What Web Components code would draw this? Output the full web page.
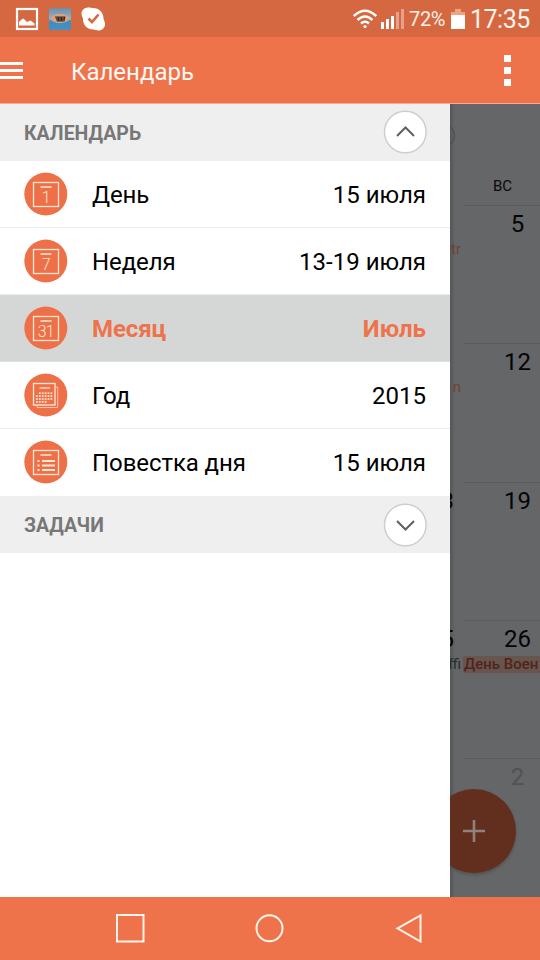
<!DOCTYPE html>
<html lang="ru">
<head>
<meta charset="utf-8">
<title>Календарь</title>
<style>
html,body{margin:0;padding:0}
body{width:540px;height:960px;overflow:hidden;font-family:Roboto,"Noto Sans",sans-serif;background:#fff}
</style>
</head>
<body>
<calendar-app></calendar-app>
<script>
const define = (name, html, setup) => customElements.define(name, class extends HTMLElement {
  constructor() {
    super();
    const t = document.createElement('template');
    t.innerHTML = html;
    this.attachShadow({mode: 'open'}).appendChild(t.content.cloneNode(true));
  }
  connectedCallback() { if (setup) setup(this, this.shadowRoot); }
});

define('status-bar', `<style>
:host{display:flex;height:37px;background:#d56841;color:#fff;align-items:center;box-sizing:border-box;padding:0 10px 0 15px}
svg{display:block;flex:none}
.apps{display:flex;gap:10px;align-items:center;flex:1}
.pct{font-size:20px;line-height:37px;margin:2px 6px 0 4px;color:#fff0e8;width:36px;white-space:nowrap;letter-spacing:-.35px}
.time{font-size:25px;line-height:37px;margin:2px 0 0 5px;width:60px;white-space:nowrap;letter-spacing:-.5px;color:#fff4ee}
</style>
<div class="apps">
<svg width="24" height="24"><rect x="2" y="2" width="20" height="20" fill="none" stroke="#fff" stroke-width="2.2"/><path d="M4 18.500V15l2.500-2.500 2-1 3.500 3.500 3.500-1.500 4 3v2z" fill="#fff"/></svg>
<svg width="22" height="22"><defs><linearGradient id="g" x2="0" y2="1"><stop offset="0" stop-color="#6f8ea5"/><stop offset=".5" stop-color="#8fb5c7"/><stop offset=".6" stop-color="#368fc6"/><stop offset="1" stop-color="#4a8fc0"/></linearGradient></defs><rect width="22" height="22" rx="1" fill="url(#g)"/><ellipse cx="11" cy="10.500" rx="9" ry="4.500" fill="#e39f7c"/><path d="M6 8.500h10.500l-1 5H8z" fill="#3c2a25"/><path d="M8 9v4M11 9v4M14 9v4" stroke="#86663e"/></svg>
<svg width="25" height="24"><path d="M7 .5C9 .2 10.500 1 12 1c6 0 10.500 4.500 10.500 10.500 0 1 1.500 3 1.500 5.500 0 4-3 6.500-6.500 6.500-2 0-3.500-1-5-1C6 22.500 2 18 2 12 2 10.500.5 9 .5 7 .5 3 3.500.7 7 .5z" fill="#fff"/><path d="M7.500 11.500l3.500 3.500 6.500-7.500" fill="none" stroke="#d56841" stroke-width="2.600"/></svg>
</div>
<svg width="24" height="20" fill="none" stroke="#fff" stroke-width="2.500"><path d="M.8 7Q12-3.500 23.200 7M4.500 11Q12 4 19.500 11M8 14.500Q12 11 16 14.500"/><circle cx="12" cy="17.500" r="1.600" fill="#fff" stroke="none"/></svg>
<svg width="24" height="22" style="margin-left:4px" fill="#fff"><path d="M0 14h3v7H0zM5 11h3v10H5zM10 8h3v13h-3z"/><path d="M15 4h3v17h-3zM20 1h3v20h-3z" opacity=".38"/></svg>
<span class="pct">72%</span>
<svg width="14" height="22"><path d="M4 1h6v3h4v4H0V4h4z" fill="#efa385"/><path d="M0 7h14v14H0z" fill="#fff"/></svg>
<span class="time">17:35</span>`);

define('app-bar', `<style>
:host{display:flex;height:67px;box-sizing:border-box;background:#ee734b;border-bottom:1px solid #f9a791;color:#fff;align-items:center;padding-right:29px}
.burger{display:grid;gap:4px;width:23px;margin-top:1px}
.burger i{height:3px;background:#fff}
h1{margin:3px 0 0 48px;font-weight:400;font-size:24px;line-height:36px;flex:1;color:#fff8f3}
.dots{display:grid;gap:5px;margin-top:1px}
.dots i{width:7px;height:7px;background:#fff}
</style><div class="burger"><i></i><i></i><i></i></div><h1><slot></slot></h1><div class="dots"><i></i><i></i><i></i></div>`);

define('section-header', `<style>
:host{display:flex;height:57px;box-sizing:border-box;background:#efefef;align-items:center;justify-content:space-between;padding:0 23px 0 24px;color:#777;font-size:19.500px;font-weight:700}
span{line-height:30px;margin-top:3px}
svg{display:block}
:host([open]) svg{margin-top:-1px}
:host([open]) path{transform:scaleY(-1);transform-origin:22px 22px}
</style><span><slot></slot></span><svg width="44" height="44"><circle cx="22.300" cy="22" r="20.800" fill="#fff" stroke="#cdcdcd" stroke-width="1.400"/><path d="M14 18l8.500 8.500 8.500-8.500" fill="none" stroke="#606060" stroke-width="2"/></svg>`);

const dots = (() => {
  let s = '';
  for (let r = 0; r < 4; r++) for (let c = 0; c < 6; c++)
    if (!(r === 0 && c < 1) && !(r === 3 && c > 3)) s += `<rect x="${12 + c * 2.9}" y="${19.300 + r * 2.900}" width="1.800" height="1.800" fill="#ffe2ce" stroke="none"/>`;
  return s;
})();
const numeral = n => `<text x="21.800" y="30.700" text-anchor="middle" font-family="Roboto" font-weight="300" font-size="16" letter-spacing="-.8" fill="#ffe8d4" stroke="none">${n}</text>`;
const frame = '<rect x="9.500" y="10.500" width="25" height="24"/><path d="M16.500 15h11" stroke-width="1.500"/>';
const glyphs = {
  day: frame + numeral(1),
  week: frame + numeral(7),
  month: frame + numeral(31),
  year: '<rect x="9.500" y="10.500" width="21.500" height="21.500"/><path d="M15.500 15h10.500"/><path d="M31 14h2.700v20.500H13V32" stroke-width="1" opacity=".7"/>' + dots,
  agenda: frame + '<path d="M18 21h13M18 25.500h13M18 30h13" stroke-width="1.800"/><path d="M13.500 21h2M13.500 25.500h2M13.500 30h2" stroke-width="1.800"/>'
};

define('menu-row', `<style>
:host{display:flex;height:67px;box-sizing:border-box;align-items:center;padding:0 24px;border-bottom:1px solid #ececec;color:#000;font-size:24px}
:host([selected]){background:#d5d7d6;color:#ee734b;font-weight:700;border-color:#dcdedd}
:host([last]){border-color:transparent}
svg{display:block;flex:none;margin-right:24px}
.l{flex:1;letter-spacing:-.08px}
span{line-height:36px;margin-top:2px;white-space:nowrap}
</style><svg width="44" height="44" fill="none" stroke="#ffe8d4" stroke-width="1.300"></svg><span class="l"><slot></slot></span><span><slot name="value"></slot></span>`,
(el, root) => { root.querySelector('svg').innerHTML = '<circle cx="21.800" cy="22" r="21.500" fill="#ee7048" stroke="none"/>' + glyphs[el.getAttribute('icon')]; });

define('nav-drawer', `<style>:host{display:block;width:450px;height:793px;background:#fff;flex:none}</style><slot></slot>`);

define('week-row', `<style>
:host{display:grid;grid-template-columns:13px 77px;height:138.300px;box-sizing:border-box;color:#050505}
.prev,.cell{overflow:hidden;white-space:nowrap;min-width:0}
.prev{display:flex;flex-direction:column;align-items:flex-end}
.cell{border-top:1px solid #595b5d}
.num{font-size:24px;line-height:38px;height:37px;margin-top:-1px}
.prev .num{padding-right:9px;margin-top:0}
.cell .num{width:45px;margin-left:auto;text-align:center}
.ev{font-size:15px;line-height:17px;margin-top:-1px;color:var(--ev,#70422e);padding-right:2px;height:17px}
.chip{font-size:15px;line-height:17px;height:17px;background:#66564f;color:#55221a;font-weight:500;padding-left:1px;margin-top:-1px}
:host([muted]){color:#505254}
</style><div class="prev"><div class="num"><slot name="prev"></slot></div><div class="ev"><slot name="event"></slot></div></div>
<div class="cell"><div class="num"><slot></slot></div><slot name="chip"></slot></div>`,
(el, root) => {
  if (!el.dataset.chip) return;
  const chip = document.createElement('div');
  chip.className = 'chip';
  chip.textContent = el.dataset.chip;
  root.querySelector('.cell').append(chip);
});

define('month-view', `<style>
:host{display:block;position:relative;flex:1;height:793px;overflow:hidden;background:linear-gradient(90deg,#535556,#646668 5px,#646668)}
header{height:101px;position:relative}
.weekday{position:absolute;left:43px;top:70px;font-size:15px;line-height:24px;color:#0a0a0a}
.ring{position:absolute;left:-18px;top:20px;width:21px;height:21px;border:1.500px solid #454749;border-radius:50%}
.fab{position:absolute;left:-18px;top:685px;width:84px;height:84px;border-radius:50%;background:#622e1e;box-shadow:0 2px 3px #56504d}
.fab svg{display:block}
</style><header><div class="ring"></div><div class="weekday">ВС</div></header>
<week-row><span slot="event">tr</span>5</week-row>
<week-row><span slot="event">n</span>12</week-row>
<week-row><span slot="prev">3</span>19</week-row>
<week-row data-chip="День Воен" style="--ev:#292b2c"><span slot="prev">5</span><span slot="event">ffi</span>26</week-row>
<week-row muted>2</week-row>
<div class="fab"><svg width="84" height="84"><path d="M31 42h22M42 31v22" stroke="#91827d" stroke-width="2.600"/></svg></div>`);

define('nav-bar', `<style>:host{display:flex;height:63px;background:#ee734b;align-items:center;justify-content:space-between;padding:0 117px 1px 115px;box-sizing:border-box}svg{display:block}</style>
<svg width="30" height="30" fill="none" stroke="#fff4ea" stroke-width="2"><rect x="2" y="2" width="26.500" height="26.500"/></svg>
<svg width="30" height="30" fill="none" stroke="#fff4ea" stroke-width="2"><circle cx="14.500" cy="15.300" r="13"/></svg>
<svg width="28" height="30" fill="none" stroke="#fff4ea" stroke-width="2"><path d="M2.500 15.300L25.500 2.500v26z"/></svg>`);

define('calendar-app', `<style>:host{display:block;width:540px;height:960px}main{display:flex;height:793px}</style>
<status-bar></status-bar><app-bar>Календарь</app-bar>
<main><nav-drawer>
<section-header open>КАЛЕНДАРЬ</section-header>
<menu-row icon="day">День<span slot="value">15 июля</span></menu-row>
<menu-row icon="week">Неделя<span slot="value">13-19 июля</span></menu-row>
<menu-row icon="month" selected>Месяц<span slot="value">Июль</span></menu-row>
<menu-row icon="year">Год<span slot="value">2015</span></menu-row>
<menu-row icon="agenda" last>Повестка дня<span slot="value">15 июля</span></menu-row>
<section-header>ЗАДАЧИ</section-header>
</nav-drawer><month-view></month-view></main><nav-bar></nav-bar>`);
</script>
</body>
</html>
